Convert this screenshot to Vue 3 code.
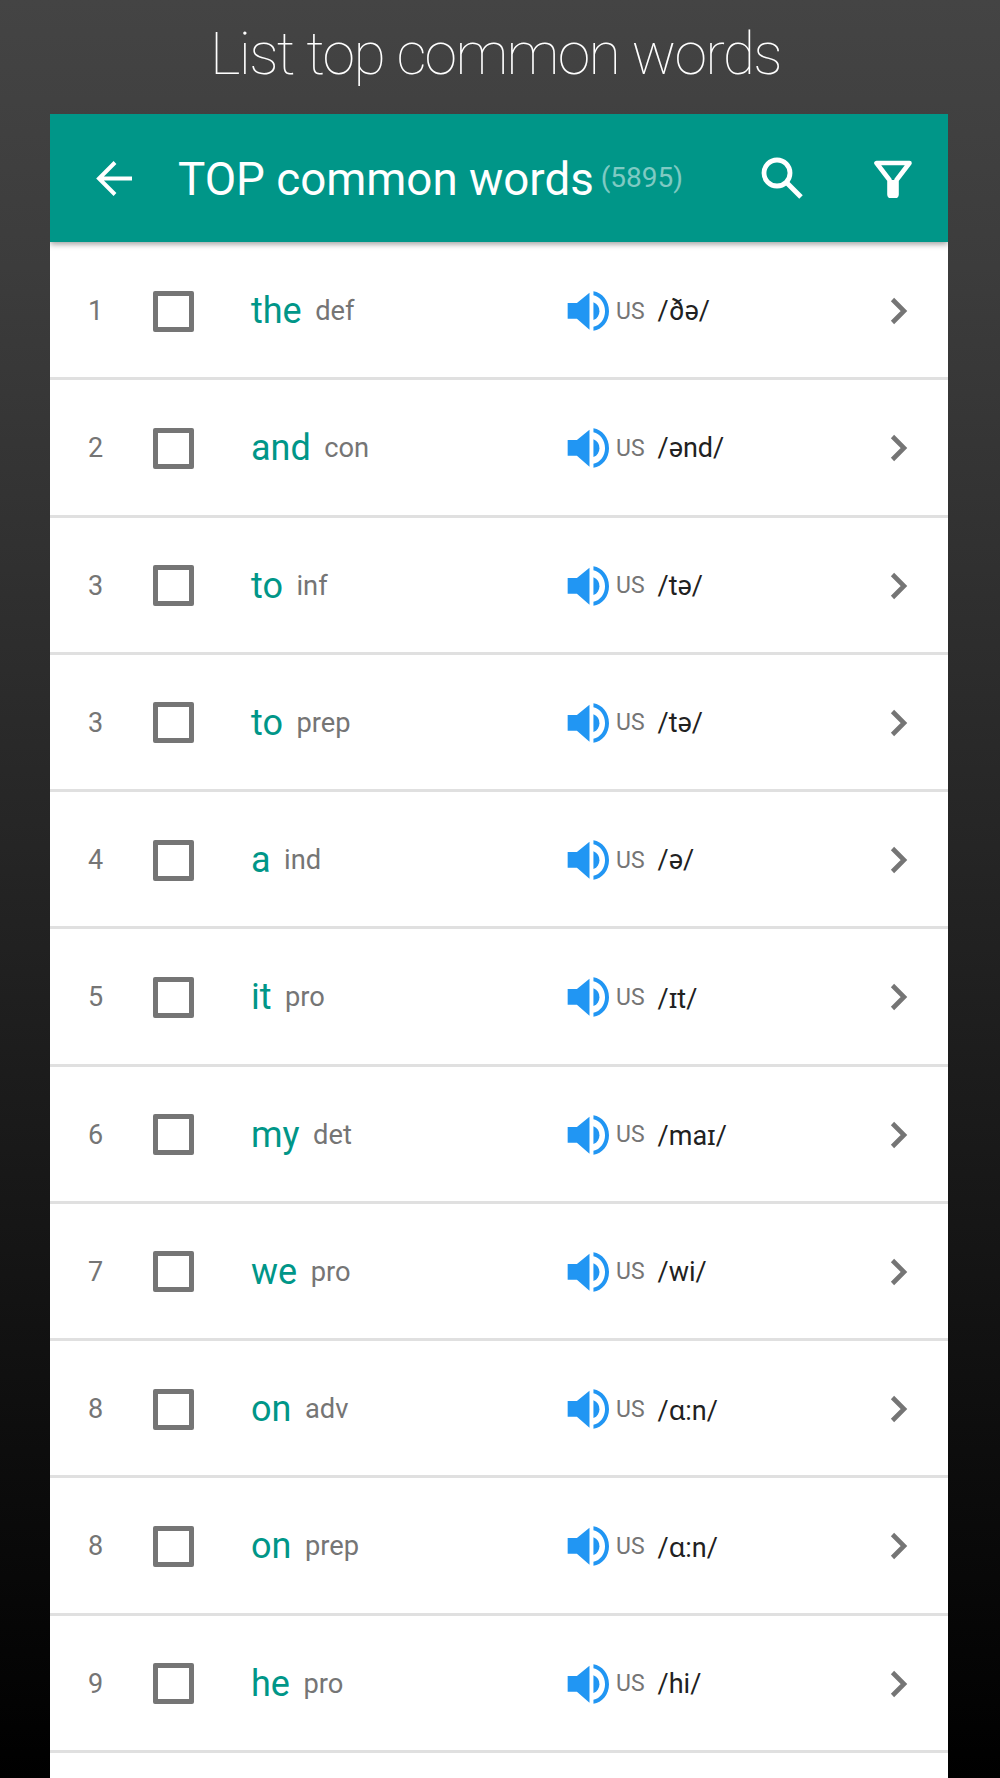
<script setup>
const words = [
  { rank: 1, word: "the", pos: "def", ipa: "/ðə/" },
  { rank: 2, word: "and", pos: "con", ipa: "/ənd/" },
  { rank: 3, word: "to", pos: "inf", ipa: "/tə/" },
  { rank: 3, word: "to", pos: "prep", ipa: "/tə/" },
  { rank: 4, word: "a", pos: "ind", ipa: "/ə/" },
  { rank: 5, word: "it", pos: "pro", ipa: "/ɪt/" },
  { rank: 6, word: "my", pos: "det", ipa: "/maɪ/" },
  { rank: 7, word: "we", pos: "pro", ipa: "/wi/" },
  { rank: 8, word: "on", pos: "adv", ipa: "/ɑ:n/" },
  { rank: 8, word: "on", pos: "prep", ipa: "/ɑ:n/" },
  { rank: 9, word: "he", pos: "pro", ipa: "/hi/" },
];
</script>

<template>
  <div class="page">
    <h1 class="headline">List top common words</h1>
    <div class="card">
      <header class="toolbar">
        <svg class="back" viewBox="0 0 37 37" width="37" height="37">
          <path d="M36 18.5H4M19 2.5L3 18.5l16 16" fill="none" stroke="#fff" stroke-width="4" />
        </svg>
        <span class="title">TOP common words</span>
        <span class="count">(5895)</span>
        <svg class="search" viewBox="0 0 42 42" width="42" height="42">
          <circle cx="16" cy="16" r="13" fill="none" stroke="#fff" stroke-width="4.8" />
          <path d="M25.5 25.5L40 40" fill="none" stroke="#fff" stroke-width="5" />
        </svg>
        <svg class="filter" viewBox="0 0 38 38" width="38" height="38">
          <path
            d="M2.5 3h33L22.5 20v14.5a2 2 0 0 1-2 2h-3a2 2 0 0 1-2-2V20z"
            fill="none"
            stroke="#fff"
            stroke-width="4.6"
            stroke-linejoin="round"
          />
          <path d="M15.5 20h7v15h-7z" fill="#fff" />
        </svg>
      </header>

      <ul class="list">
        <li v-for="(w, i) in words" :key="i" class="row">
          <span class="rank">{{ w.rank }}</span>
          <span class="check"></span>
          <span class="entry">
            <span class="word">{{ w.word }}</span>
            <span class="pos">{{ w.pos }}</span>
          </span>
          <svg class="speaker" viewBox="80 92 130 125" width="43" height="42">
            <path d="M82 130h28l38-31v112l-38-33H82z" fill="#2196f3" />
            <path d="M160 128c12 5 18 15 18 27s-6 22-18 27z" fill="#2196f3" />
            <path d="M160 95c26 4 47 28 47 60s-21 55-47 59v-12c20-4 35-24 35-47s-15-44-35-48z" fill="#2196f3" />
          </svg>
          <span class="lang">US</span>
          <span class="ipa">{{ w.ipa }}</span>
          <svg class="chevron" viewBox="0 0 18 28" width="18" height="28">
            <path d="M2.5 2.5L14 14 2.5 25.5" fill="none" stroke="#757575" stroke-width="4.6" />
          </svg>
        </li>
      </ul>
    </div>
  </div>
</template>

<style>
html,
body {
  margin: 0;
  background: #000;
}
</style>

<style scoped>
.page {
  width: 1000px;
  height: 1778px;
  overflow: hidden;
  display: flex;
  flex-direction: column;
  background: linear-gradient(180deg, #444 0%, #3c3c3c 15%, #000 100%);
  font-family: Roboto, "Noto Sans", sans-serif;
}
.headline {
  margin: 0;
  height: 114px;
  padding-right: 9px;
  line-height: 108px;
  text-align: center;
  color: #fff;
  font-size: 59px;
  letter-spacing: -1.7px;
  font-weight: 100;
}
.card {
  flex: 1;
  margin: 0 52px 0 50px;
  background: #fff;
  min-height: 0;
  overflow: hidden;
}
.toolbar {
  height: 128px;
  display: flex;
  align-items: center;
  background: #009688;
  box-shadow: 0 2px 6px rgba(0, 0, 0, 0.4);
  position: relative;
  color: #fff;
}
.back {
  margin-left: 46px;
}
.title {
  margin-left: 45px;
  font-size: 45.7px;
  position: relative;
  top: 1px;
}
.count {
  margin-left: 7px;
  font-size: 28px;
  color: rgba(255, 255, 255, 0.5);
  position: relative;
  top: -1px;
}
.search {
  margin-left: 78px;
}
.filter {
  margin-left: 71px;
  position: relative;
  top: 1px;
}
.list {
  list-style: none;
  margin: 0;
  padding: 1px 0 0;
}
.row {
  height: 137.25px;
  box-sizing: border-box;
  padding: 2px 40px 0 0;
  border-bottom: 3px solid #e0e0e0;
  display: flex;
  align-items: center;
}
.rank {
  width: 103px;
  padding-left: 38px;
  box-sizing: border-box;
  font-size: 27px;
  color: #757575;
}
.check {
  width: 41px;
  height: 41px;
  box-sizing: border-box;
  border: 5px solid #757575;
  border-radius: 2px;
}
.entry {
  width: 316px;
  margin-left: 57px;
  display: flex;
  align-items: center;
  gap: 13.5px;
}
.word {
  font-size: 36px;
  color: #009688;
}
.pos {
  font-size: 27.3px;
  color: #757575;
}
.speaker {
  flex: none;
}
.lang {
  margin-left: 6px;
  font-size: 23px;
  color: #757575;
}
.ipa {
  margin-left: 13px;
  font-size: 27px;
  color: #212121;
}
.chevron {
  margin-left: auto;
}
</style>
